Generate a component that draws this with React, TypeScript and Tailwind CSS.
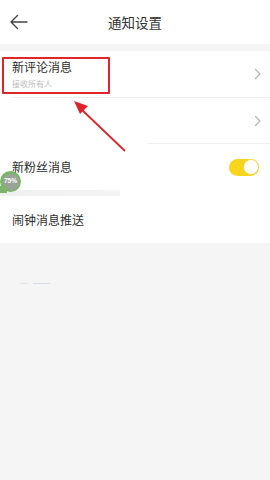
import React from "react";

const Chevron = () => (
  <svg width="8" height="12" viewBox="0 0 8 12" fill="none">
    <path d="M1.5 1.5 L6 6 L1.5 10.5" stroke="#b5b5b5" strokeWidth="1.2" strokeLinecap="round" strokeLinejoin="round" />
  </svg>
);

export default function App() {
  return (
    <div
      className="relative w-[270px] h-[480px] bg-[#f5f5f5] overflow-hidden"
      style={{ fontFamily: '"Noto Sans CJK SC", "Noto Sans", sans-serif' }}
    >
      {/* header */}
      <div className="relative h-[44px] bg-white flex items-center justify-center">
        <div className="absolute left-[9px] top-[14px]">
          <svg width="20" height="16" viewBox="0 0 20 16" fill="none">
            <path d="M18 8 H2 M8.5 1.5 L2 8 L8.5 14.5" stroke="#444" strokeWidth="1.4" strokeLinecap="round" strokeLinejoin="round" />
          </svg>
        </div>
        <span className="text-[13.5px] text-[#333]">通知设置</span>
      </div>

      <div className="h-[7px]" />

      {/* list */}
      <div className="bg-white">
        <div className="h-[46px] flex items-center justify-between pl-[12px] pr-[8px]">
          <div className="flex flex-col pt-[1px]">
            <span className="text-[12px] leading-[16px] text-[#2e2e2e]">新评论消息</span>
            <span className="text-[8px] leading-[12px] mt-[3px] text-[#bcbcbc]">接收所有人</span>
          </div>
          <Chevron />
        </div>
        <div className="ml-[12px] h-px bg-[#eeeeee]" />
        <div className="h-[45px] flex items-center justify-end pr-[8px]">
          <Chevron />
        </div>
        <div className="ml-[148px] h-px bg-[#eeeeee]" />
        <div className="h-[46px] flex items-center justify-between pl-[12px] pr-[11px]">
          <span className="text-[12px] text-[#2e2e2e]">新粉丝消息</span>
          <div className="w-[30px] h-[17px] rounded-full bg-[#f7d51d] flex items-center justify-end">
            <div className="w-[16px] h-[16px] rounded-full bg-white border border-[#f2d64a]" />
          </div>
        </div>
        <div className="w-[120px] h-[6px] bg-gradient-to-r from-[#efefef] to-[#f4f4f4]" />
        <div className="h-[47px] flex items-center pl-[12px]">
          <span className="text-[12px] text-[#2e2e2e]">闹钟消息推送</span>
        </div>
      </div>

      {/* faint artifacts */}
      <div className="absolute left-[20px] top-[283px] w-[8px] h-px bg-[#e4e4e4]" />
      <div className="absolute left-[33px] top-[283px] w-[17px] h-px bg-[#d6dbe6]" />

      {/* red highlight box */}
      <div className="absolute left-[2px] top-[57px] w-[108px] h-[37px] border-2 border-[#e0262b] rounded-[1px]" />

      {/* red arrow */}
      <svg className="absolute left-0 top-0" width="270" height="480" viewBox="0 0 270 480" fill="none">
        <line x1="125" y1="151" x2="81" y2="109" stroke="#d9262b" strokeWidth="1.8" />
        <polygon points="74,101 88,106 80,114" fill="#e32228" />
      </svg>

      {/* 75% badge */}
      <div className="absolute left-[0px] top-[171px] w-[21px] h-[21px] rounded-full bg-[#7bb46a] flex items-center justify-center">
        <div className="w-[16px] h-[16px] rounded-full bg-[#9aa39a] flex items-center justify-center">
          <span className="text-[6.5px] font-bold text-white leading-none" style={{ fontFamily: '"Liberation Sans", sans-serif' }}>75%</span>
        </div>
      </div>
      <div className="absolute left-[0px] top-[186px] w-[7px] h-[7px] bg-[#7bb46a]" />
    </div>
  );
}
